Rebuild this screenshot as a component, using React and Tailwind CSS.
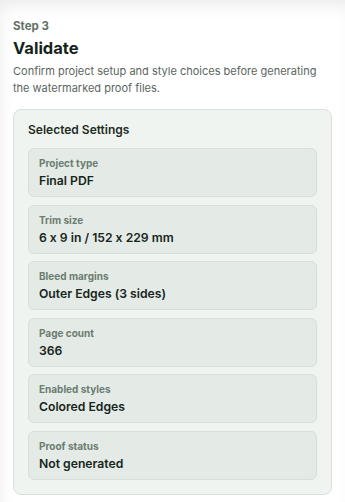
const settings = [
  { label: 'Project type', value: 'Final PDF' },
  { label: 'Trim size', value: '6 x 9 in / 152 x 229 mm' },
  { label: 'Bleed margins', value: 'Outer Edges (3 sides)' },
  { label: 'Page count', value: '366' },
  { label: 'Enabled styles', value: 'Colored Edges' },
  { label: 'Proof status', value: 'Not generated' },
];

const SettingItem = ({ label, value }) => (
  <div className="rounded-md border border-[#d6dfd9] bg-[#e4ebe6] px-[10px] pt-[8px] pb-[6px]">
    <div className="text-[10px] font-bold leading-[12px] text-[#6b7c71]">{label}</div>
    <div className="mt-[3px] text-[12.2px] font-semibold leading-[18px] text-[#17251c]">{value}</div>
  </div>
);

export default function App() {
  return (
    <div
      className="min-h-[502px] w-[345px] bg-white px-[13px] pt-[18px] pb-[7px] shadow-[inset_4px_10px_18px_-6px_rgba(0,0,0,0.09)]"
      style={{ fontFamily: 'Inter, "Noto Sans", sans-serif', fontFeatureSettings: '"calt" 0' }}
    >
      <div className="text-[11.5px] font-bold leading-[16px] text-[#5f7266]">Step 3</div>
      <h1 className="mt-[3px] text-[16.5px] font-bold leading-[22px] text-[#14241a]">Validate</h1>
      <p className="mt-[4px] text-[11px] leading-[16.5px] text-[#5b6560]">
        Confirm project setup and style choices before generating the watermarked proof files.
      </p>
      <div className="mt-[13px] rounded-lg border border-[#d9e2dc] bg-[#eff4f1] px-[14px] pt-[12px] pb-[14px]">
        <div className="text-[12px] font-semibold leading-[16px] text-[#1e2c23]">Selected Settings</div>
        <div className="mt-[10px] flex flex-col gap-[7.6px]">
          {settings.map((s) => (
            <SettingItem key={s.label} label={s.label} value={s.value} />
          ))}
        </div>
      </div>
    </div>
  );
}
